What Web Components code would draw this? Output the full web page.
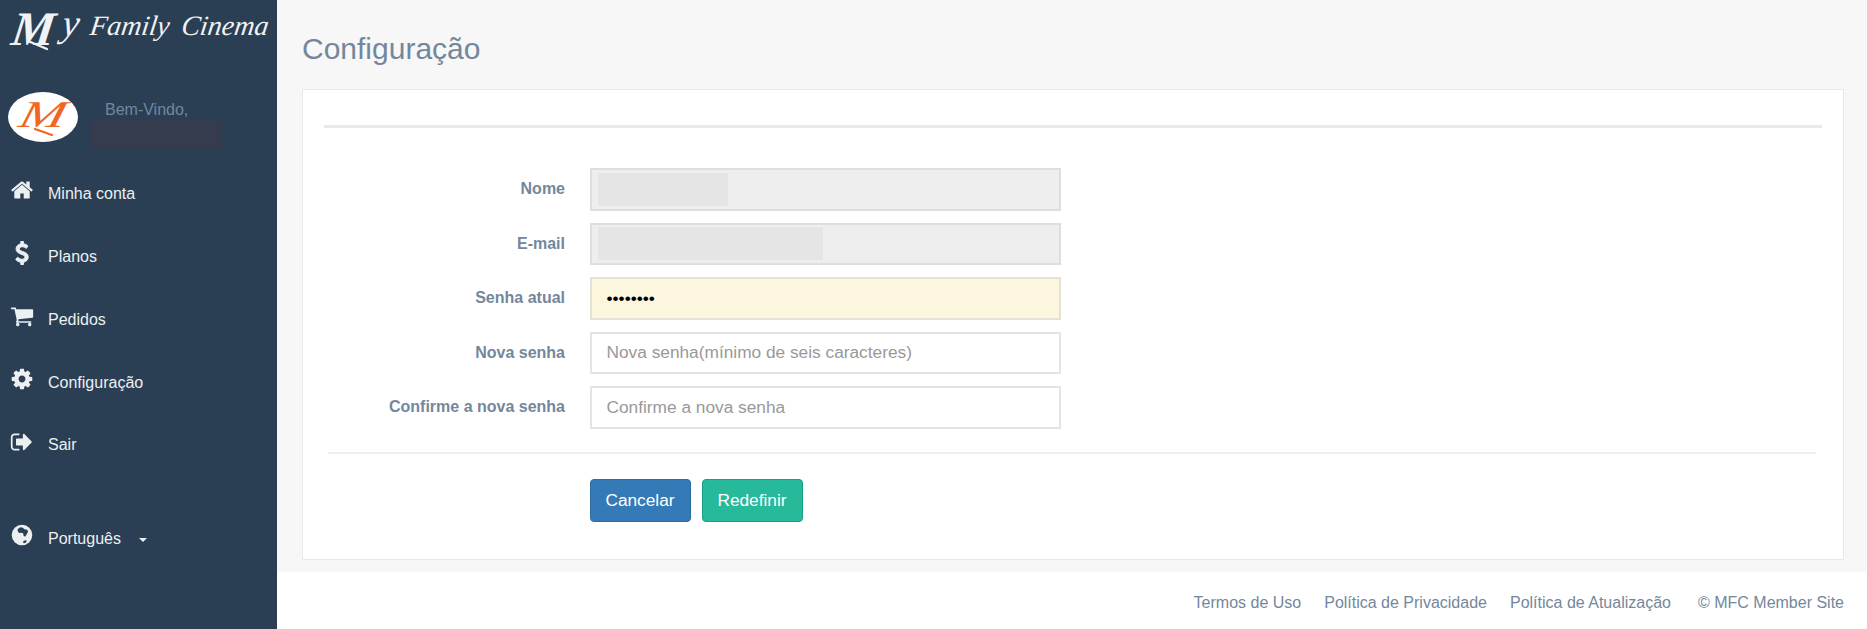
<!DOCTYPE html>
<html lang="pt">
<head>
<meta charset="utf-8">
<title>Configuração</title>
<style>
    html, body {
        margin: 0;
        height: 100%;
        background: #fff;
        font-family: "Liberation Sans", Arial, sans-serif;
    }
</style>
</head>
<body>
<mfc-app>
    <mfc-sidebar slot="sidebar">
        <mfc-brand></mfc-brand>
        <mfc-profile>Bem-Vindo,</mfc-profile>
        <nav-item icon="home">Minha conta</nav-item>
        <nav-item icon="usd">Planos</nav-item>
        <nav-item icon="cart">Pedidos</nav-item>
        <nav-item icon="cog">Configuração</nav-item>
        <nav-item icon="out">Sair</nav-item>
        <nav-item icon="globe" class="lang" caret>Português</nav-item>
    </mfc-sidebar>

    <page-title>Configuração</page-title>

    <form-card>
        <form-field label="Nome" kind="disabled" patch="130"></form-field>
        <form-field label="E-mail" kind="disabled" patch="225"></form-field>
        <form-field label="Senha atual" kind="filled" value="••••••••"></form-field>
        <form-field label="Nova senha" hint="Nova senha(mínimo de seis caracteres)"></form-field>
        <form-field label="Confirme a nova senha" hint="Confirme a nova senha"></form-field>
        <mfc-button slot="actions" color="#337ab7" edge="#2e6da4">Cancelar</mfc-button>
        <mfc-button slot="actions" color="#26b99a" edge="#169f85">Redefinir</mfc-button>
    </form-card>

    <mfc-footer slot="footer">
        <span>Termos de Uso</span>
        <span>Política de Privacidade</span>
        <span>Política de Atualização</span>
        <span class="copy">© MFC Member Site</span>
    </mfc-footer>
</mfc-app>

<script>
// 图标
const icons = {
    home: `<path d="M1472 992v480q0 26-19 45t-45 19h-384v-384h-256v384h-384q-26 0-45-19t-19-45v-480q0-1 .5-3t.5-3l575-474 575 474q1 2 1 6zm223-69l-62 74q-8 9-21 11h-3q-13 0-21-7l-692-577-692 577q-12 8-24 7-13-2-21-11l-62-74q-8-10-7-23.5t11-21.5l719-599q32-26 76-26t76 26l244 204v-195q0-14 9-23t23-9h192q14 0 23 9t9 23v408l219 182q10 8 11 21.5t-7 23.5z"/>`,
    usd: `<path stroke="#ecf0f1" stroke-width="70" d="M1362 1185q0 153-99.5 263.5t-258.5 136.5v175q0 14-9 23t-23 9h-135q-13 0-22.5-9.5t-9.5-22.5v-175q-66-9-127.5-31t-101.5-44.5-74-48-46.5-37.5-17.5-18q-17-21-2-41l103-135q7-10 23-12 15-2 24 9l2 2q113 99 243 125 37 8 74 8 81 0 142.5-43t61.5-122q0-28-15-53t-33.5-42-58.5-37.5-66-32-80-32.5q-39-16-61.5-25t-61.5-26.5-62.5-31-56.5-35.5-53.5-42.5-43.5-49-35.5-58-21-66.5-8.5-78q0-138 98-242t255-134v-180q0-13 9.5-22.5t22.5-9.5h135q14 0 23 9t9 23v176q57 6 110.5 23t87 33.5 63.5 37.5 39 29 15 14q17 18 5 38l-81 146q-8 15-23 16-14 3-27-7-3-3-14.5-12t-39-26.5-58.5-32-74.5-26-85.5-11.5q-95 0-155 43t-60 111q0 26 8.5 48t29.5 41.5 39.5 33 56 31 60.5 27 70 27.5q53 20 81 31.5t76 35 75.5 42.5 62 50 53 63.5 31.5 76.5 13 94z"/>`,
    cart: `<path d="M704 1536q0 52-38 90t-90 38-90-38-38-90 38-90 90-38 90 38 38 90zm896 0q0 52-38 90t-90 38-90-38-38-90 38-90 90-38 90 38 38 90zm128-1088v512q0 24-16.5 42.5t-40.5 21.5l-1044 122q13 60 13 70 0 16-24 64h920q26 0 45 19t19 45-19 45-45 19h-1024q-26 0-45-19t-19-45q0-11 8-31.5t16-36 21.5-40 15.5-29.5l-177-823h-204q-26 0-45-19t-19-45 19-45 45-19h256q16 0 28.5 6.5t19.5 15.5 13 24.5 8 26 5.5 29.5 4.5 26h1201q26 0 45 19t19 45z"/>`,
    cog: `<path d="M1152 896q0-106-75-181t-181-75-181 75-75 181 75 181 181 75 181-75 75-181zm512-109v222q0 12-8 23t-20 13l-185 28q-19 54-39 91 35 50 107 138 10 12 10 25t-9 23q-27 37-99 108t-94 71q-12 0-26-9l-138-108q-44 23-91 38-16 136-29 186-7 28-36 28h-222q-14 0-24.5-8.5t-11.5-21.5l-28-184q-49-16-90-37l-141 107q-10 9-25 9-14 0-25-11-126-114-165-168-7-10-7-23 0-12 8-23 15-21 51-66.5t54-70.5q-27-50-41-99l-183-27q-13-2-21-12.5t-8-23.5v-222q0-12 8-23t19-13l186-28q14-46 39-92-40-57-107-138-10-12-10-24 0-10 9-23 26-36 98.5-107.5t94.5-71.5q13 0 26 10l138 107q44-23 91-38 16-136 29-186 7-28 36-28h222q14 0 24.5 8.5t11.5 21.5l28 184q49 16 90 37l142-107q9-9 24-9 13 0 25 10 129 119 165 170 7 8 7 22 0 12-8 23-15 21-51 66.5t-54 70.5q26 50 41 98l183 28q13 2 21 12.5t8 23.5z"/>`,
    out: `<path d="M704 1440q0 4 1 20t.5 26.5-3 23.5-10 19.5-20.5 6.5h-320q-119 0-203.5-84.5t-84.5-203.5v-704q0-119 84.5-203.5t203.5-84.5h320q13 0 22.5 9.5t9.5 22.5q0 4 1 20t.5 26.5-3 23.5-10 19.5-20.5 6.5h-320q-66 0-113 47t-47 113v704q0 66 47 113t113 47h312l11.5 1 11.5 3 8 5.5 7 9 2 13.5zm928-544q0 26-19 45l-544 544q-19 19-45 19t-45-19-19-45v-288h-448q-26 0-45-19t-19-45v-384q0-26 19-45t45-19h448v-288q0-26 19-45t45-19 45 19l544 544q19 19 19 45z"/>`,
    globe: `<circle cx="896" cy="896" r="768"/>
            <path fill="#2a3f54" d="M560 470l210-150 190 30 110 110 210 40 70 160-120 190-90 170-130-70-20-170-130-60-170 20-110-120zM1010 1350l130-60 120 40-70 130-130 60-90-60z"/>`
};

// 整页布局
const appTemplate = document.createElement("template");
appTemplate.innerHTML = /*html*/ `
<style>
    :host {
        display: grid;
        grid-template-columns: 277px 1fr;
        width: 100%;
        height: 629px;
        overflow: hidden;
    }

    .main {
        display: flex;
        flex-direction: column;
        min-width: 0;
    }

    .content {
        height: 572px;
        box-sizing: border-box;
        padding: 0 23px 0 25px;
        background: #f7f7f7;
    }
</style>
<slot name="sidebar"></slot>
<div class="main">
    <div class="content"><slot></slot></div>
    <slot name="footer"></slot>
</div>
`;

customElements.define("mfc-app", class extends HTMLElement {
    constructor() {
        super();
        this.attachShadow({ mode: "open" });
        this.shadowRoot.append(appTemplate.content.cloneNode(true));
    }
});

// 侧边栏
const sidebarTemplate = document.createElement("template");
sidebarTemplate.innerHTML = /*html*/ `
<style>
    :host {
        display: flex;
        flex-direction: column;
        background: #2a3f54;
        height: 629px;
    }
</style>
<slot></slot>
`;

customElements.define("mfc-sidebar", class extends HTMLElement {
    constructor() {
        super();
        this.attachShadow({ mode: "open" });
        this.shadowRoot.append(sidebarTemplate.content.cloneNode(true));
    }
});

// 标志
const brandTemplate = document.createElement("template");
brandTemplate.innerHTML = /*html*/ `
<style>
    :host {
        display: block;
        height: 80px;
        box-sizing: border-box;
        padding-left: 8px;
        position: relative;
    }

    .word {
        display: flex;
        align-items: flex-start;
        height: 60px;
        color: #f1f2f3;
        font-family: "Liberation Serif", serif;
        font-style: italic;
        line-height: 1.2;
        white-space: nowrap;
        transform: skewX(-8deg);
        transform-origin: 0 100%;
    }

    .m {
        font-size: 48px;
        font-weight: bold;
        margin: 0 7px 0 0;
    }

    .y {
        font-size: 38px;
        margin: 1px 11px 0 0;
    }

    .rest {
        font-size: 28px;
        margin: 9px 12px 0 0;
    }

    svg {
        position: absolute;
        left: 26px;
        top: 39px;
        width: 24px;
        height: 12px;
    }
</style>
<div class="word">
    <span class="m">M</span><span class="y">y</span><span class="rest">Family</span><span class="rest">Cinema</span>
</div>
<svg viewBox="0 0 24 12"><path d="M2 2L21 10" stroke="#f1f2f3" stroke-width="2.4" stroke-linecap="round"/></svg>
`;

customElements.define("mfc-brand", class extends HTMLElement {
    constructor() {
        super();
        this.attachShadow({ mode: "open" });
        this.shadowRoot.append(brandTemplate.content.cloneNode(true));
    }
});

// 用户信息
const profileTemplate = document.createElement("template");
profileTemplate.innerHTML = /*html*/ `
<style>
    :host {
        display: flex;
        height: 82.8px;
        box-sizing: border-box;
        padding: 12px 0 0 8px;
    }

    .avatar {
        position: relative;
        flex: none;
        width: 70px;
        height: 50px;
        border-radius: 50%;
        background: #fff;
        display: flex;
        justify-content: center;
        color: #f26522;
        overflow: hidden;
    }

    .avatar span {
        display: inline-block;
        font: italic 38px/44px "Liberation Serif", serif;
        transform: scaleX(1.45) skewX(-10deg);
    }

    .avatar svg {
        position: absolute;
        left: 26px;
        top: 35px;
        width: 20px;
        height: 10px;
    }

    .info {
        margin-left: 14px;
        display: flex;
        flex-direction: column;
        width: 129px;
    }

    .hello {
        margin-left: 13px;
        height: 28px;
        box-sizing: border-box;
        padding-top: 8px;
        font-size: 16px;
        line-height: 20px;
        color: #73879c;
        white-space: nowrap;
    }

    .name {
        height: 30px;
        background: #343c4e;
    }
</style>
<div class="avatar"><span>M</span><svg viewBox="0 0 20 10"><path d="M1 2L18 8" stroke="#f26522" stroke-width="2.2" stroke-linecap="round"/></svg></div>
<div class="info">
    <div class="hello"><slot></slot></div>
    <div class="name"></div>
</div>
`;

customElements.define("mfc-profile", class extends HTMLElement {
    constructor() {
        super();
        this.attachShadow({ mode: "open" });
        this.shadowRoot.append(profileTemplate.content.cloneNode(true));
    }
});

// 菜单项
const navTemplate = document.createElement("template");
navTemplate.innerHTML = /*html*/ `
<style>
    :host {
        display: flex;
        align-items: center;
        height: 62.8px;
        box-sizing: border-box;
        padding-left: 10px;
        font-size: 16px;
        color: #ecf0f1;
    }

    :host(.lang) {
        margin-top: 30.4px;
    }

    svg.icon {
        flex: none;
        width: 24px;
        height: 24px;
        margin-right: 14px;
        margin-top: -7.5px;
        fill: #ecf0f1;
    }

    .caret {
        width: 0;
        height: 0;
        margin-left: 18px;
        margin-top: 2px;
        border-top: 4.5px solid #ecf0f1;
        border-left: 4.5px solid transparent;
        border-right: 4.5px solid transparent;
    }
</style>
<svg class="icon" viewBox="0 0 1792 1792"></svg>
<slot></slot>
<span class="caret" hidden></span>
`;

customElements.define("nav-item", class extends HTMLElement {
    constructor() {
        super();
        this.attachShadow({ mode: "open" });
        this.shadowRoot.append(navTemplate.content.cloneNode(true));
        this.shadowRoot.querySelector("svg.icon").innerHTML = icons[this.getAttribute("icon")];
        const caret = this.shadowRoot.querySelector(".caret");
        if (this.hasAttribute("caret")) {
            caret.removeAttribute("hidden");
        } else {
            caret.remove();
        }
    }
});

// 页面标题
const titleTemplate = document.createElement("template");
titleTemplate.innerHTML = /*html*/ `
<style>
    :host {
        display: block;
        height: 89px;
        box-sizing: border-box;
        padding-top: 30px;
        font-size: 30px;
        line-height: 38px;
        color: #73879c;
    }
</style>
<slot></slot>
`;

customElements.define("page-title", class extends HTMLElement {
    constructor() {
        super();
        this.attachShadow({ mode: "open" });
        this.shadowRoot.append(titleTemplate.content.cloneNode(true));
    }
});

// 表单卡片
const cardTemplate = document.createElement("template");
cardTemplate.innerHTML = /*html*/ `
<style>
    :host {
        display: block;
        height: 471px;
        box-sizing: border-box;
        border: 1px solid #e6e9ed;
        background: #fff;
        padding: 35px 21px 0;
    }

    .rule {
        height: 3px;
        background: #e6e9ed;
        margin-bottom: 40px;
    }

    .fields {
        display: flex;
        flex-direction: column;
        gap: 12px;
    }

    .line {
        height: 2px;
        background: #eeeeee;
        margin: 23px 6px 25px 4px;
    }

    .actions {
        display: flex;
        gap: 11px;
        padding-left: 265.5px;
    }
</style>
<div class="rule"></div>
<div class="fields"><slot></slot></div>
<div class="line"></div>
<div class="actions"><slot name="actions"></slot></div>
`;

customElements.define("form-card", class extends HTMLElement {
    constructor() {
        super();
        this.attachShadow({ mode: "open" });
        this.shadowRoot.append(cardTemplate.content.cloneNode(true));
    }
});

// 表单行
const fieldTemplate = document.createElement("template");
fieldTemplate.innerHTML = /*html*/ `
<style>
    :host {
        display: grid;
        grid-template-columns: 241px 471px;
        column-gap: 24.5px;
        align-items: center;
        font-size: 16px;
    }

    label {
        text-align: right;
        font-weight: bold;
        color: #73879c;
        white-space: nowrap;
    }

    .box {
        display: flex;
        align-items: center;
        height: 42.5px;
        box-sizing: border-box;
        padding-left: 15px;
        border: 2px solid #e4e4e4;
        background: #fff;
        font-size: 17.3px;
        color: #999;
        white-space: nowrap;
    }

    :host([kind="disabled"]) .box {
        padding-left: 6px;
        background: #eeeeee;
        border-color: #dedede;
    }

    :host([kind="filled"]) .box {
        background: #fdf6de;
        color: #000;
        border-color: #e4e2d6;
    }

    .patch {
        height: 33px;
        background: #e6e5e6;
    }
</style>
<label></label>
<div class="box"></div>
`;

customElements.define("form-field", class extends HTMLElement {
    constructor() {
        super();
        this.attachShadow({ mode: "open" });
        this.shadowRoot.append(fieldTemplate.content.cloneNode(true));
    }

    connectedCallback() {
        this.shadowRoot.querySelector("label").textContent = this.getAttribute("label");
        const box = this.shadowRoot.querySelector(".box");
        // 打码区域
        if (this.hasAttribute("patch")) {
            const patch = document.createElement("div");
            patch.className = "patch";
            patch.style.width = this.getAttribute("patch") + "px";
            box.append(patch);
        } else {
            box.textContent = this.getAttribute("value") || this.getAttribute("hint");
        }
    }
});

// 按钮
const buttonTemplate = document.createElement("template");
buttonTemplate.innerHTML = /*html*/ `
<style>
    :host {
        display: flex;
        align-items: center;
        justify-content: center;
        width: 101px;
        height: 43px;
        box-sizing: border-box;
        border-radius: 4px;
        border: 1px solid var(--edge);
        background: var(--fill);
        color: #fff;
        font-size: 17.3px;
    }
</style>
<slot></slot>
`;

customElements.define("mfc-button", class extends HTMLElement {
    constructor() {
        super();
        this.attachShadow({ mode: "open" });
        this.shadowRoot.append(buttonTemplate.content.cloneNode(true));
        this.style.setProperty("--fill", this.getAttribute("color"));
        this.style.setProperty("--edge", this.getAttribute("edge"));
    }
});

// 页脚
const footerTemplate = document.createElement("template");
footerTemplate.innerHTML = /*html*/ `
<style>
    :host {
        display: flex;
        justify-content: flex-end;
        align-items: center;
        gap: 23px;
        height: 57px;
        box-sizing: border-box;
        padding: 4px 23px 0 0;
        background: #fff;
        font-size: 16px;
        color: #73879c;
        white-space: nowrap;
    }

    ::slotted(.copy) {
        margin-left: 4px;
    }
</style>
<slot></slot>
`;

customElements.define("mfc-footer", class extends HTMLElement {
    constructor() {
        super();
        this.attachShadow({ mode: "open" });
        this.shadowRoot.append(footerTemplate.content.cloneNode(true));
    }
});
</script>
</body>
</html>
